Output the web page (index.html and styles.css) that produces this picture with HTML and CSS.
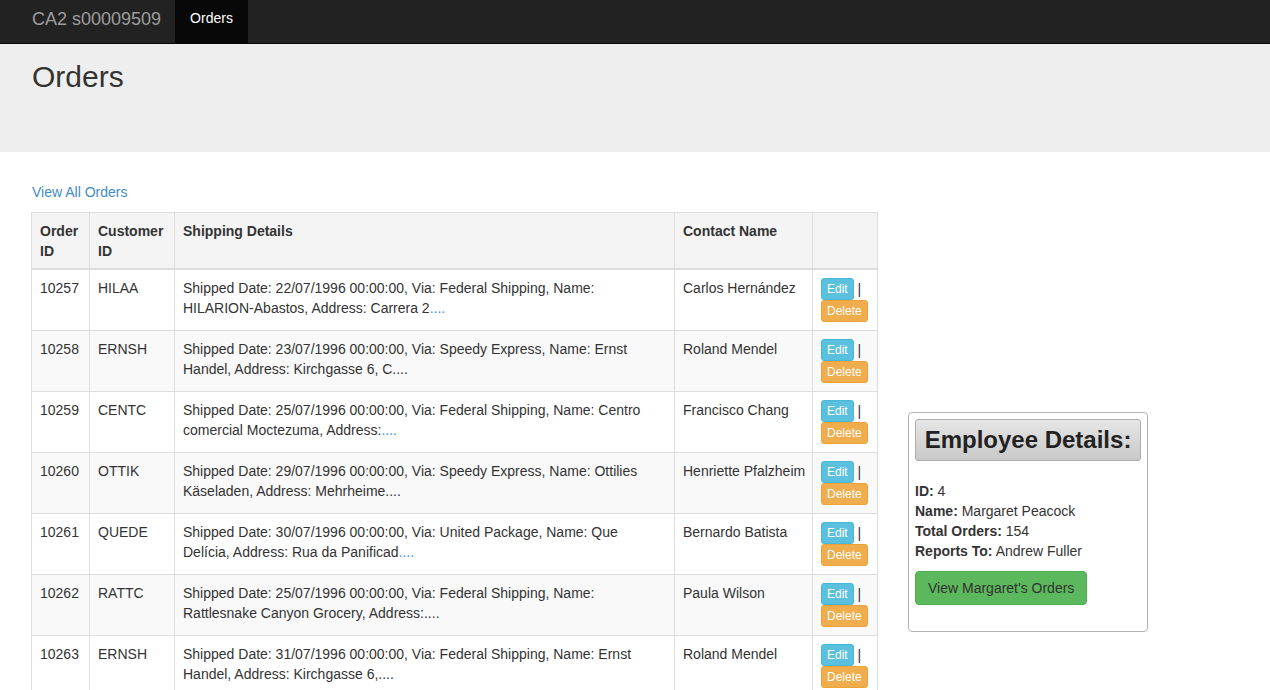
FILE: index.html
```html
<!DOCTYPE html>
<html>
<head>
<meta charset="utf-8">
<title>Orders</title>
<link rel="stylesheet" href="styles.css">
</head>
<body>
<nav class="navbar">
  <a class="brand" href="#">CA2 s00009509</a>
  <a class="nav-item active" href="#">Orders</a>
</nav>
<header class="jumbotron">
  <h1>Orders</h1>
</header>
<main class="content">
  <p class="all-link"><a href="#">View All Orders</a></p>
  <div class="layout">
    <table class="orders">
      <colgroup>
        <col class="c-id"><col class="c-cust"><col class="c-ship"><col class="c-contact"><col class="c-act">
      </colgroup>
      <thead>
        <tr><th>Order ID</th><th>Customer ID</th><th>Shipping Details</th><th>Contact Name</th><th></th></tr>
      </thead>
      <tbody>
        <tr><td>10257</td><td>HILAA</td><td>Shipped Date: 22/07/1996 00:00:00, Via: Federal Shipping, Name: HILARION-Abastos, Address: Carrera 2<a href="#">....</a></td><td class="contact">Carlos Hernández</td><td class="act"><a class="btn btn-info" href="#">Edit</a> | <a class="btn btn-warning" href="#">Delete</a></td></tr>
        <tr><td>10258</td><td>ERNSH</td><td>Shipped Date: 23/07/1996 00:00:00, Via: Speedy Express, Name: Ernst Handel, Address: Kirchgasse 6, C<a class="dots" href="#">....</a></td><td class="contact">Roland Mendel</td><td class="act"><a class="btn btn-info" href="#">Edit</a> | <a class="btn btn-warning" href="#">Delete</a></td></tr>
        <tr><td>10259</td><td>CENTC</td><td>Shipped Date: 25/07/1996 00:00:00, Via: Federal Shipping, Name: Centro comercial Moctezuma, Address:<a href="#">....</a></td><td class="contact">Francisco Chang</td><td class="act"><a class="btn btn-info" href="#">Edit</a> | <a class="btn btn-warning" href="#">Delete</a></td></tr>
        <tr><td>10260</td><td>OTTIK</td><td>Shipped Date: 29/07/1996 00:00:00, Via: Speedy Express, Name: Ottilies Käseladen, Address: Mehrheime<a class="dots" href="#">....</a></td><td class="contact">Henriette Pfalzheim</td><td class="act"><a class="btn btn-info" href="#">Edit</a> | <a class="btn btn-warning" href="#">Delete</a></td></tr>
        <tr><td>10261</td><td>QUEDE</td><td>Shipped Date: 30/07/1996 00:00:00, Via: United Package, Name: Que Delícia, Address: Rua da Panificad<a href="#">....</a></td><td class="contact">Bernardo Batista</td><td class="act"><a class="btn btn-info" href="#">Edit</a> | <a class="btn btn-warning" href="#">Delete</a></td></tr>
        <tr><td>10262</td><td>RATTC</td><td>Shipped Date: 25/07/1996 00:00:00, Via: Federal Shipping, Name: Rattlesnake Canyon Grocery, Address:<a class="dots" href="#">....</a></td><td class="contact">Paula Wilson</td><td class="act"><a class="btn btn-info" href="#">Edit</a> | <a class="btn btn-warning" href="#">Delete</a></td></tr>
        <tr><td>10263</td><td>ERNSH</td><td>Shipped Date: 31/07/1996 00:00:00, Via: Federal Shipping, Name: Ernst Handel, Address: Kirchgasse 6,<a class="dots" href="#">....</a></td><td class="contact">Roland Mendel</td><td class="act"><a class="btn btn-info" href="#">Edit</a> | <a class="btn btn-warning" href="#">Delete</a></td></tr>
      </tbody>
    </table>
    <aside class="employee">
      <div class="emp-title">Employee Details:</div>
      <div class="emp-info">
        <div><b>ID:</b> 4</div>
        <div><b>Name:</b> Margaret Peacock</div>
        <div><b>Total Orders:</b> 154</div>
        <div><b>Reports To:</b> Andrew Fuller</div>
      </div>
      <a class="btn-success" href="#">View Margaret's Orders</a>
    </aside>
  </div>
</main>
</body>
</html>
```

FILE: styles.css
```css
* { box-sizing: border-box; }
html, body {
  margin: 0;
  padding: 0;
}
body {
  font-family: "Liberation Sans", Arial, Helvetica, sans-serif;
  font-size: 14px;
  line-height: 20px;
  color: #333;
  background: #fff;
  overflow: hidden;
}
a { color: #428bca; text-decoration: none; }

.navbar {
  height: 44px;
  background: #222;
  border-bottom: 1px solid #080808;
  display: flex;
  align-items: stretch;
  padding-left: 17px;
}
.brand {
  color: #9d9d9d;
  font-size: 18px;
  line-height: 20px;
  padding: 9px 14px 14px 15px;
}
.nav-item {
  color: #9d9d9d;
  padding: 8px 15px 15px;
}
.nav-item.active {
  background: #080808;
  color: #fff;
}

.jumbotron {
  background: #eee;
  height: 108px;
  padding: 16px 32px 0;
}
.jumbotron h1 {
  margin: 0;
  font-size: 30px;
  line-height: 33px;
  font-weight: 500;
  color: #333;
}

.content {
  padding: 30px 32px 0 31px;
}
.all-link {
  margin: 0 0 10px 1px;
}

.layout {
  display: flex;
  align-items: flex-start;
  gap: 30px;
}

.orders {
  width: 846px;
  flex: none;
  table-layout: fixed;
  border-collapse: collapse;
  border: 1px solid #ddd;
}
.c-id { width: 58px; }
.c-cust { width: 85px; }
.c-ship { width: 500px; }
.c-contact { width: 138px; }
.c-act { width: 65px; }

.orders th, .orders td {
  border: 1px solid #ddd;
  padding: 8px;
  vertical-align: top;
  text-align: left;
}
.orders th {
  background: #f4f4f4;
  font-weight: bold;
  border-bottom-width: 2px;
  padding-bottom: 7px;
}
.orders tbody tr:nth-child(even) td {
  background: #f9f9f9;
}
.orders .contact { white-space: nowrap; }
.orders .dots { color: #333; }

.act { line-height: 22px; }
.btn {
  display: inline-block;
  vertical-align: top;
  color: #fff;
  font-size: 12px;
  line-height: 18px;
  padding: 1px 5px;
  border: 1px solid transparent;
  border-radius: 3px;
}
.btn-info { background: #5bc0de; border-color: #46b8da; }
.btn-warning { background: #f0ad4e; border-color: #eea236; }

.employee {
  flex: none;
  width: 240px;
  margin-top: 200px;
  border: 1px solid #b3b3b3;
  border-radius: 4px;
  padding: 6px 6px 26px;
}
.emp-title {
  font-size: 24px;
  font-weight: bold;
  line-height: 28px;
  color: #222;
  text-align: center;
  padding: 6px 0 6px;
  border: 1px solid #adadad;
  border-radius: 3px;
  background: linear-gradient(#e6e6e6, #c9c9c9);
}
.emp-info {
  margin-top: 20px;
}
.btn-success {
  display: inline-block;
  margin-top: 10px;
  background: #5cb85c;
  border: 1px solid #4cae4c;
  border-radius: 4px;
  color: #333;
  padding: 6px 12px;
  line-height: 20px;
}
```
